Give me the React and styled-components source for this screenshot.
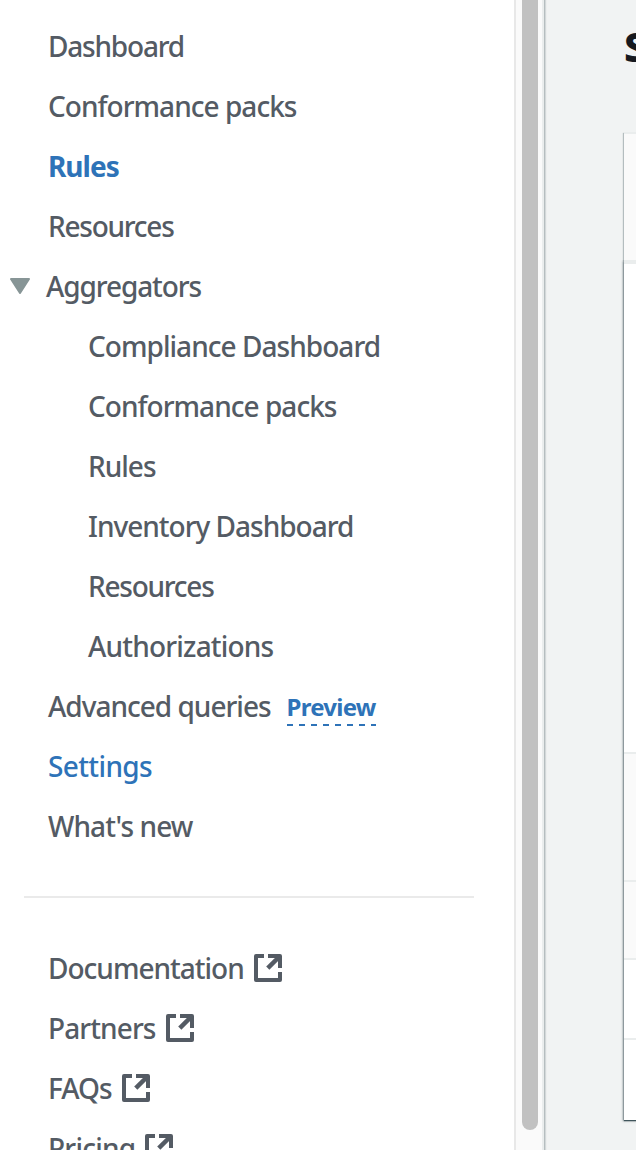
import React from "react";
import styled, { createGlobalStyle } from "styled-components";

const Global = createGlobalStyle`
  * { box-sizing: border-box; }
  body { margin: 0; background: #f1f3f3; overflow: hidden; font-family: "Noto Sans", "Liberation Sans", sans-serif; }
`;

const Page = styled.div`
  display: flex;
  width: 636px;
  height: 1150px;
  overflow: hidden;
  background: #f1f3f3;
`;
const Sidebar = styled.aside`
  display: flex;
  flex: none;
  width: 544px;
  height: 1150px;
  background: #fff;
  border-right: 2px solid #eaeded;
  box-shadow: 1px 0 0 rgba(0, 28, 36, 0.14), 2px 0 1px rgba(0, 28, 36, 0.12);
`;
const Nav = styled.nav`
  width: 514px;
  padding-top: 16px;
  overflow: hidden;
`;
const Row = styled.div`
  display: flex;
  align-items: center;
  height: 60px;
  padding-left: ${(p) => (p.$nested ? 88 : 48)}px;
  white-space: nowrap;
`;
const GroupRow = styled(Row)`
  padding-left: 10px;
`;
const Label = styled.a`
  font-size: 28px;
  line-height: 60px;
  font-weight: ${(p) => (p.$active ? 700 : 500)};
  letter-spacing: ${(p) => p.$spacing ?? -1}px;
  color: ${(p) => (p.$active || p.$link ? "#2e73b8" : "#545b64")};
`;
const Caret = styled.svg`
  width: 20px;
  height: 16px;
  margin-right: 16px;
`;
const Preview = styled.a`
  margin: 5px 0 0 16px;
  width: 89px;
  height: 35px;
  font-size: 24px;
  line-height: 32px;
  font-weight: 700;
  letter-spacing: -0.75px;
  color: #2e73b8;
  background: repeating-linear-gradient(90deg, #2e73b8 0 6px, transparent 6px 12px) 0 100% / 100% 2px no-repeat;
`;
const Divider = styled.hr`
  width: 450px;
  height: 2px;
  margin: 40px 0 40px 24px;
  border: 0;
  background: #eaeaea;
`;
const ExternalSvg = styled.svg`
  width: 28px;
  height: 28px;
  margin-left: 10px;
`;
const Track = styled.div`
  width: 28px;
  padding-left: 6px;
  border-left: 2px solid #e8e8e8;
  background: #fafafa;
`;
const Thumb = styled.div`
  width: 16px;
  height: 1130px;
  border-radius: 0 0 8px 8px;
  background: #c1c1c1;
`;
const Main = styled.main`
  width: 92px;
  padding-left: 80px;
  overflow: hidden;
`;
const Title = styled.h1`
  height: 132px;
  margin: 0;
  font-size: 41px;
  line-height: 93px;
  font-weight: 800;
  color: #16191f;
`;
const CardHeader = styled.header`
  width: 200px;
  height: 128px;
  border-top: 2px solid #eaeded;
  background: #fafafa;
  box-shadow: -1px 1px 1px rgba(0, 28, 36, 0.25);
`;
const CardBody = styled.section`
  position: relative;
  width: 200px;
  box-shadow: 0 1px 1px rgba(0, 28, 36, 0.6), -1px 1px 2px rgba(0, 28, 36, 0.5);
  clip-path: inset(0 0 -4px -4px);
`;
const Band = styled.div`
  height: ${(p) => p.$h}px;
  background: ${(p) => (p.$shade ? "#fafafa" : "#fff")};
  border-top: ${(p) => p.$line ?? 2}px solid #eaeded;
`;

const External = () => (
  <ExternalSvg viewBox="0 0 28 28" fill="none" stroke="#545b64" strokeWidth="4">
    <path d="M10 2H2v24h24v-8" strokeLinejoin="round" />
    <path d="M14 2h12v12" strokeLinejoin="round" />
    <path d="M13.8 14.2L26 2" strokeWidth="4.5" />
  </ExternalSvg>
);

const top = [
  { text: "Dashboard", spacing: -1.2 },
  { text: "Conformance packs", spacing: -0.97 },
  { text: "Rules", active: true },
  { text: "Resources", spacing: -1.25 },
];
const aggregators = [
  { text: "Compliance Dashboard", spacing: -0.96 },
  { text: "Conformance packs", spacing: -0.97 },
  { text: "Rules" },
  { text: "Inventory Dashboard" },
  { text: "Resources", spacing: -1.25 },
  { text: "Authorizations", spacing: -0.8 },
];
const external = [
  { text: "Documentation" },
  { text: "Partners", spacing: -0.9 },
  { text: "FAQs" },
  { text: "Pricing", spacing: -0.75 },
];

export default function App() {
  return (
    <Page>
      <Global />
      <Sidebar>
        <Nav>
          {top.map((i) => (
            <Row key={i.text}><Label $active={i.active} $spacing={i.spacing}>{i.text}</Label></Row>
          ))}
          <GroupRow>
            <Caret viewBox="0 0 20 16"><path d="M1 1h18l-9 14z" fill="#879596" stroke="#879596" strokeWidth="2" strokeLinejoin="round" /></Caret>
            <Label $spacing={-1.1}>Aggregators</Label>
          </GroupRow>
          {aggregators.map((i) => (
            <Row key={i.text} $nested><Label $spacing={i.spacing}>{i.text}</Label></Row>
          ))}
          <Row><Label>Advanced queries</Label><Preview>Preview</Preview></Row>
          <Row><Label $link $spacing={-0.62}>Settings</Label></Row>
          <Row><Label $spacing={-0.9}>What's new</Label></Row>
          <Divider />
          {external.map((i) => (
            <Row key={i.text}><Label $spacing={i.spacing}>{i.text}</Label><External /></Row>
          ))}
        </Nav>
        <Track><Thumb /></Track>
      </Sidebar>
      <Main>
        <Title>Settings</Title>
        <CardHeader />
        <CardBody>
          <Band $h={492} $line={4} />
          <Band $h={128} $shade />
          <Band $h={78} $shade />
          <Band $h={80} />
          <Band $h={82} />
        </CardBody>
      </Main>
    </Page>
  );
}
